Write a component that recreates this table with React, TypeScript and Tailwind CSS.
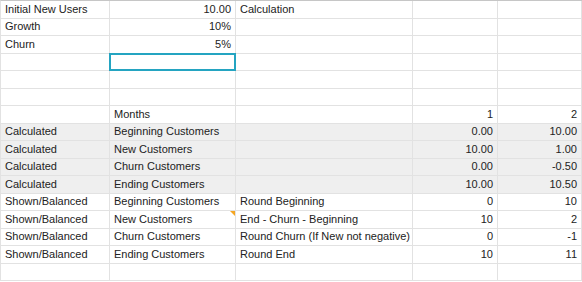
import React from "react";

type Row = {
    cells: string[];
    shaded?: boolean;
};

// which columns are right-aligned (numbers)
const RIGHT = [false, false, false, true, true];

const ROWS: Row[] = [
    { cells: ["Initial New Users", "10.00", "Calculation", "", ""] },
    { cells: ["Growth", "10%", "", "", ""] },
    { cells: ["Churn", "5%", "", "", ""] },
    { cells: ["", "", "", "", ""] },
    { cells: ["", "", "", "", ""] },
    { cells: ["", "", "", "", ""] },
    { cells: ["", "Months", "", "1", "2"] },
    { cells: ["Calculated", "Beginning Customers", "", "0.00", "10.00"], shaded: true },
    { cells: ["Calculated", "New Customers", "", "10.00", "1.00"], shaded: true },
    { cells: ["Calculated", "Churn Customers", "", "0.00", "-0.50"], shaded: true },
    { cells: ["Calculated", "Ending Customers", "", "10.00", "10.50"], shaded: true },
    { cells: ["Shown/Balanced", "Beginning Customers", "Round Beginning", "0", "10"] },
    { cells: ["Shown/Balanced", "New Customers", "End - Churn - Beginning", "10", "2"] },
    { cells: ["Shown/Balanced", "Churn Customers", "Round Churn (If New not negative)", "0", "-1"] },
    { cells: ["Shown/Balanced", "Ending Customers", "Round End", "10", "11"] },
    { cells: ["", "", "", "", ""] },
];

export default function App() {
    return (
        <div
            className="w-[582px] h-[282px] overflow-hidden bg-white text-[#222] text-[11px] leading-none"
            style={{ fontFamily: '"Liberation Sans", Arial, sans-serif' }}
        >
            <div className="grid grid-cols-[109px_126px_177px_85px_84px] auto-rows-[17.5px] border-t border-l border-t-[#c6c6c6] border-l-[#e2e2e2]">
                {ROWS.map((row, r) =>
                    row.cells.map((text, c) => {
                        const right = RIGHT[c] || (c === 1 && r < 3);
                        const selected = r === 3 && c === 1;
                        const note = r === 12 && c === 1;
                        return (
                            <div
                                key={`${r}-${c}`}
                                className={`relative flex items-center px-[4px] border-r border-b border-[#e2e2e2] whitespace-nowrap ${right ? "justify-end" : "justify-start"
                                    } ${row.shaded ? "bg-[#efefef]" : "bg-white"}`}
                            >
                                {text}
                                {selected && (
                                    <div className="absolute -top-px -left-px -right-px -bottom-px border-2 border-[#24a4c1]" />
                                )}
                                {note && (
                                    <div className="absolute top-0 right-0 w-0 h-0 border-l-[5px] border-l-transparent border-t-[5px] border-t-[#f5a623]" />
                                )}
                            </div>
                        );
                    })
                )}
            </div>
        </div>
    );
}
